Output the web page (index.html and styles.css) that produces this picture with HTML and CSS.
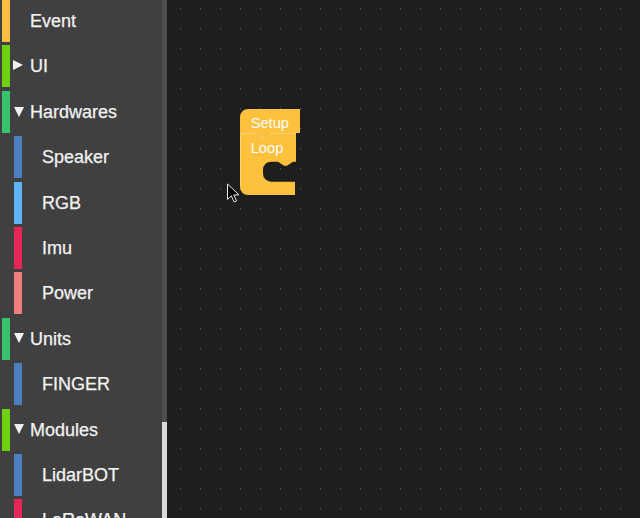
FILE: index.html
```html
<!DOCTYPE html>
<html lang="en">
<head>
<meta charset="utf-8">
<title>Blocks</title>
<link rel="stylesheet" href="styles.css">
</head>
<body>
<div class="app">
  <nav class="sidebar">
    <ul class="list">
      <li class="row cat"><span class="bar c-event"></span><span class="tog"></span><span class="label">Event</span></li>
      <li class="row cat"><span class="bar c-ui"></span><span class="tog"><i class="tri-r"></i></span><span class="label">UI</span></li>
      <li class="row cat"><span class="bar c-hw"></span><span class="tog"><i class="tri-d"></i></span><span class="label">Hardwares</span></li>
      <li class="row child"><span class="bar c-blue"></span><span class="tog"></span><span class="label">Speaker</span></li>
      <li class="row child"><span class="bar c-rgb"></span><span class="tog"></span><span class="label">RGB</span></li>
      <li class="row child"><span class="bar c-imu"></span><span class="tog"></span><span class="label">Imu</span></li>
      <li class="row child"><span class="bar c-power"></span><span class="tog"></span><span class="label">Power</span></li>
      <li class="row cat"><span class="bar c-hw"></span><span class="tog"><i class="tri-d"></i></span><span class="label">Units</span></li>
      <li class="row child"><span class="bar c-blue"></span><span class="tog"></span><span class="label">FINGER</span></li>
      <li class="row cat"><span class="bar c-ui"></span><span class="tog"><i class="tri-d"></i></span><span class="label">Modules</span></li>
      <li class="row child"><span class="bar c-blue"></span><span class="tog"></span><span class="label">LidarBOT</span></li>
      <li class="row child"><span class="bar c-imu"></span><span class="tog"></span><span class="label">LoRaWAN</span></li>
    </ul>
    <div class="track"><div class="track-gap"></div><div class="thumb"></div></div>
  </nav>
  <main class="canvas">
    <svg class="ws" width="473" height="518" xmlns="http://www.w3.org/2000/svg">
      <defs>
        <pattern id="grid" patternUnits="userSpaceOnUse" x="180" y="8" width="20" height="20">
          <rect x="0" y="0" width="1" height="1.5" fill="#5a5a5a"/>
        </pattern>
      </defs>
      <g transform="translate(-167 0)">
        <rect x="167" y="0" width="473" height="518" fill="url(#grid)"/>
        <path class="blk" d="M240,117 A8,8 0 0 1 248,109 H300 V133 H270 l-6,4 l-3,0 l-6,-4 H240 Z"/>
        <path class="blk" d="M240,133 H255 l6,4 l3,0 l6,-4 H296 V161.7 H293 l-6,4 l-3,0 l-6,-4 H271 a8,8 0 0 0 -8,8 V173.7 a8,8 0 0 0 8,8 H295 V195 H248 a8,8 0 0 1 -8,-8 Z"/>
        <path class="hl" d="M240.5,186 V133.5 H255 l6,4 l3,0 l6,-4 H295.5"/>
        <text class="blk-text" x="250.7" y="127.5">Setup</text>
        <text class="blk-text" x="250.7" y="152.6">Loop</text>
        <path class="cursor" d="M227.5,184 V199.5 L231.3,195.8 L234.2,202 L236.6,201 L233.8,194.9 L239,194.9 Z"/>
      </g>
    </svg>
  </main>
</div>
</body>
</html>
```
FILE: styles.css
```css
html, body {
  margin: 0;
  padding: 0;
  width: 640px;
  height: 518px;
  overflow: hidden;
  background: #1e1e1e;
}
.app {
  display: flex;
  width: 640px;
  height: 518px;
}
.sidebar {
  display: flex;
  width: 167px;
  height: 518px;
  flex: none;
  overflow: hidden;
  background: #404040;
}
.list {
  list-style: none;
  margin: 0;
  padding: 0;
  width: 162px;
  flex: none;
}
.row {
  display: flex;
  align-items: center;
  height: 42px;
  margin-bottom: 3.4px;
}
.bar {
  align-self: stretch;
  width: 8px;
  flex: none;
}
.cat .bar { margin-left: 2px; }
.child .bar { margin-left: 14px; }
.tog {
  width: 20px;
  flex: none;
  display: flex;
  align-items: center;
  box-sizing: border-box;
  padding-left: 3.3px;
}
.tri-r {
  display: block;
  width: 0;
  height: 0;
  border-left: 10.7px solid #f2f2f2;
  border-top: 5.85px solid transparent;
  border-bottom: 5.85px solid transparent;
  margin-bottom: 2px;
}
.tri-d {
  display: block;
  width: 0;
  height: 0;
  margin-left: 0.7px;
  border-top: 10.7px solid #f2f2f2;
  border-left: 5px solid transparent;
  border-right: 5px solid transparent;
  margin-bottom: 0.5px;
}
.label {
  font-family: "Liberation Sans", Arial, sans-serif;
  font-size: 18px;
  line-height: 18px;
  color: #f2f2f2;
  -webkit-text-stroke: 0.25px #f2f2f2;
  white-space: nowrap;
}
.c-event { background: #fbbd42; }
.c-ui { background: #6fd00c; }
.c-hw { background: #37c36c; }
.c-blue { background: #4c7fc4; }
.c-rgb { background: #5db4f6; }
.c-imu { background: #e92456; }
.c-power { background: #ef7f7a; }
.track {
  width: 5px;
  flex: none;
  display: flex;
  flex-direction: column;
  background: #4d4d4d;
}
.track-gap {
  height: 421.7px;
  flex: none;
}
.thumb {
  flex: 1;
  background: #d9d9d9;
}
.canvas {
  flex: 1;
  height: 518px;
  background: #1e1e1e;
}
.ws {
  display: block;
}
.blk {
  fill: #fdc13d;
}
.hl {
  fill: none;
  stroke: #ffd98a;
  stroke-width: 1;
  opacity: 0.7;
}
.blk-text {
  font-family: "Liberation Sans", Arial, sans-serif;
  font-size: 14.67px;
  fill: #ffffff;
}
.cursor {
  fill: #000;
  stroke: #e8e8e8;
  stroke-width: 1;
  stroke-linejoin: round;
}
```
